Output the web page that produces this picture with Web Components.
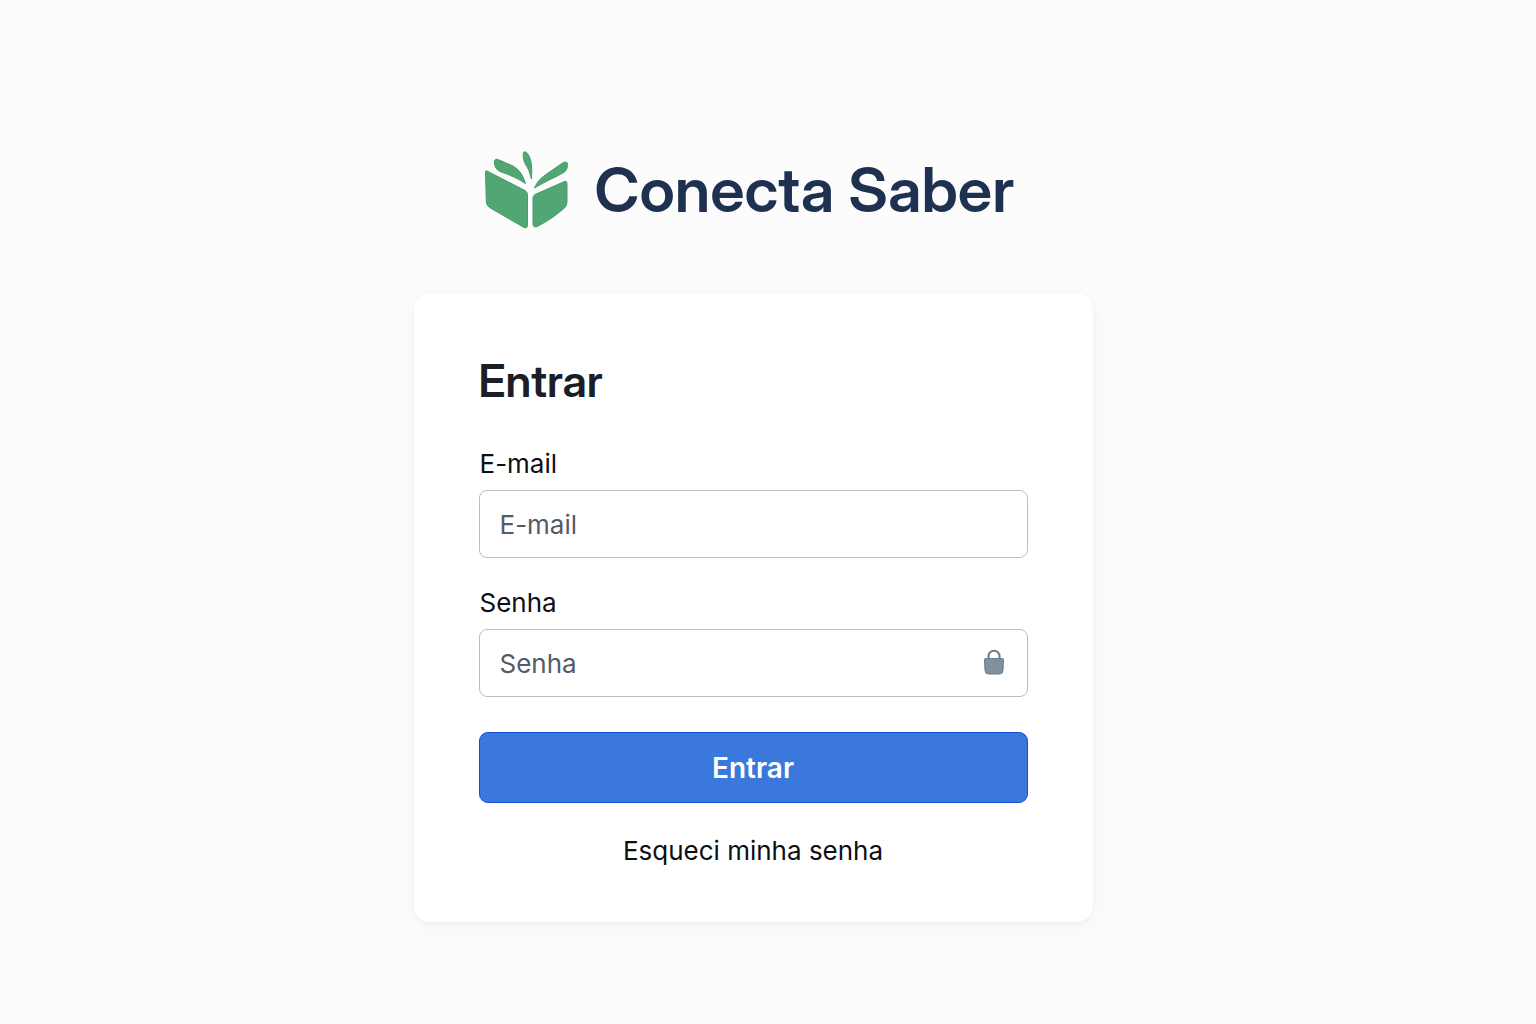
<!DOCTYPE html>
<html lang="pt-BR">
<head>
<meta charset="utf-8">
<meta name="viewport" content="width=device-width, initial-scale=1">
<title>Conecta Saber</title>
<style>
  body { margin: 0; background: #fcfcfc; color: #0d0f14; font-family: Inter, "Liberation Sans", sans-serif; font-size: 26px; line-height: 32px; }
</style>
</head>
<body>
<login-page>
  <brand-logo slot="brand">Conecta Saber</brand-logo>
  <login-card heading="Entrar">
    <form-field label="E-mail" type="email" name="email"></form-field>
    <form-field label="Senha" type="password" name="senha"><lock-icon slot="icon"></lock-icon></form-field>
    <primary-button>Entrar</primary-button>
    <text-link href="#recuperar">Esqueci minha senha</text-link>
  </login-card>
</login-page>
<script>
  class BaseElement extends HTMLElement {
    constructor() {
      super();
      this.attachShadow({ mode: 'open' });
    }
    connectedCallback() {
      this.shadowRoot.innerHTML = '<style>*{box-sizing:border-box}</style>' + this.render();
    }
    attr(name) { return this.getAttribute(name) || ''; }
  }

  customElements.define('login-page', class extends BaseElement {
    render() {
      return `<style>
        :host { display: block; }
        main { display: flex; flex-direction: column; align-items: center; gap: 55px; padding: 142px 30px 100px 0; }
        .brand, .content { width: 100%; max-width: 679px; }
        .brand { padding: 0 65px; }
      </style>
      <main><div class="brand"><slot name="brand"></slot></div><div class="content"><slot></slot></div></main>`;
    }
  });

  customElements.define('brand-logo', class extends BaseElement {
    render() {
      return `<style>
        :host { display: flex; align-items: center; gap: 20px; color: #1f3150; }
        svg { flex: none; width: 96px; height: 96px; fill: #52a673; stroke: #43a06a; stroke-width: 1; stroke-linejoin: round; }
        span { font-family: "Inter Display", Inter, "Liberation Sans", sans-serif; font-size: 62px; line-height: 76px; font-weight: 600; white-space: nowrap; }
      </style>
      <svg viewBox="3 0 96 96" aria-hidden="true">
        <path d="M9.500 30Q9.500 28.300 11 29L49 48.500Q51.500 50 51.500 52.500V83Q51.500 86.800 48 85.500L13.500 65.500Q10.500 63.500 10.300 60Z"/>
        <path d="M59 52.500L88.500 39.500Q91 38.800 91 41.500V60Q91 64 88 66.500Q76 77 61.500 84.500Q57 86 57 82V56Q57 53.500 59 52.500Z"/>
        <path d="M18.500 18.500Q19.500 16.500 22 17.500L37 24Q46 29 49.500 41.500Q40 35 24 29.500Q17.500 26 18.500 18.500Z"/>
        <path d="M47.300 10.500Q48 9 50.500 10.500Q57 16 55.500 37Q53.500 27.500 48.500 20.500Q46.500 15 47.300 10.500Z"/>
        <path d="M58.500 46Q62 37.500 70 32.500L86.500 21Q91.500 18.500 91.500 22.500Q91.500 28 88.500 30Q82 34 73 38Q65 42 58.500 46Z"/>
      </svg>
      <span><slot></slot></span>`;
    }
  });

  customElements.define('login-card', class extends BaseElement {
    render() {
      return `<style>
        :host { display: block; background: #fff; border-radius: 16px; padding: 60px 65px 55px; box-shadow: 0 2px 4px rgba(0,0,0,.03), 0 4px 24px rgba(0,0,0,.04); }
        h1 { margin: 0 0 39px; color: #1b1e27; font-family: "Inter Display", Inter, "Liberation Sans", sans-serif; font-size: 45px; line-height: 56px; font-weight: 600; }
        form { display: flex; flex-direction: column; }
        ::slotted(form-field:not(:first-child)) { margin-top: 29px; }
        ::slotted(primary-button) { margin-top: 35px; }
        ::slotted(text-link) { margin-top: 32px; }
      </style>
      <h1>${this.attr('heading')}</h1>
      <form><slot></slot></form>`;
    }
  });

  customElements.define('form-field', class extends BaseElement {
    render() {
      return `<style>
        :host { display: flex; flex-direction: column; gap: 10px; }
        .box { display: flex; align-items: center; height: 68px; padding: 0 21px 0 20px; border: 1px solid #b3c0cc; border-radius: 8px; background: #fff; }
        .box:focus-within { border-color: #3a78dc; }
        label { padding-left: 1px; }
        input { flex: 1; min-width: 0; height: 100%; padding: 0; border: 0; outline: 0; background: none; font: inherit; color: inherit; }
        input::placeholder { color: #525c68; opacity: 1; }
      </style>
      <label for="control">${this.attr('label')}</label>
      <div class="box">
        <input id="control" type="${this.attr('type')}" name="${this.attr('name')}" placeholder="${this.attr('label')}">
        <slot name="icon"></slot>
      </div>`;
    }
  });

  customElements.define('lock-icon', class extends BaseElement {
    render() {
      return `<style>
        :host { display: block; flex: none; }
        svg { display: block; width: 24px; height: 28px; }
      </style>
      <svg viewBox="0 0 24 28" aria-hidden="true">
        <path d="M6.500 10V7.200a5.500 5.500 0 0 1 11 0V10" fill="none" stroke="#6b7c8c" stroke-width="2"/>
        <path d="M3.500 9.500h17q1 0 1 1l-.5 11q-.2 3.500-3.500 3.500h-11Q3.200 25 3 21.500l-.5-11q0-1 1-1Z" fill="#81909e" stroke="#6b7c8c"/>
      </svg>`;
    }
  });

  customElements.define('primary-button', class extends BaseElement {
    render() {
      return `<style>
        :host { display: block; }
        button { display: block; width: 100%; height: 71px; padding: 0; border: 1px solid #0f50d0; border-radius: 9px; background: #3a78dc; color: #fff; font: inherit; font-size: 28px; font-weight: 600; cursor: pointer; }
      </style>
      <button type="button"><slot></slot></button>`;
    }
  });

  customElements.define('text-link', class extends BaseElement {
    render() {
      return `<style>
        :host { display: block; text-align: center; }
        a { color: inherit; text-decoration: none; }
        a:hover { text-decoration: underline; }
      </style>
      <a href="${this.attr('href')}"><slot></slot></a>`;
    }
  });
</script>
</body>
</html>
